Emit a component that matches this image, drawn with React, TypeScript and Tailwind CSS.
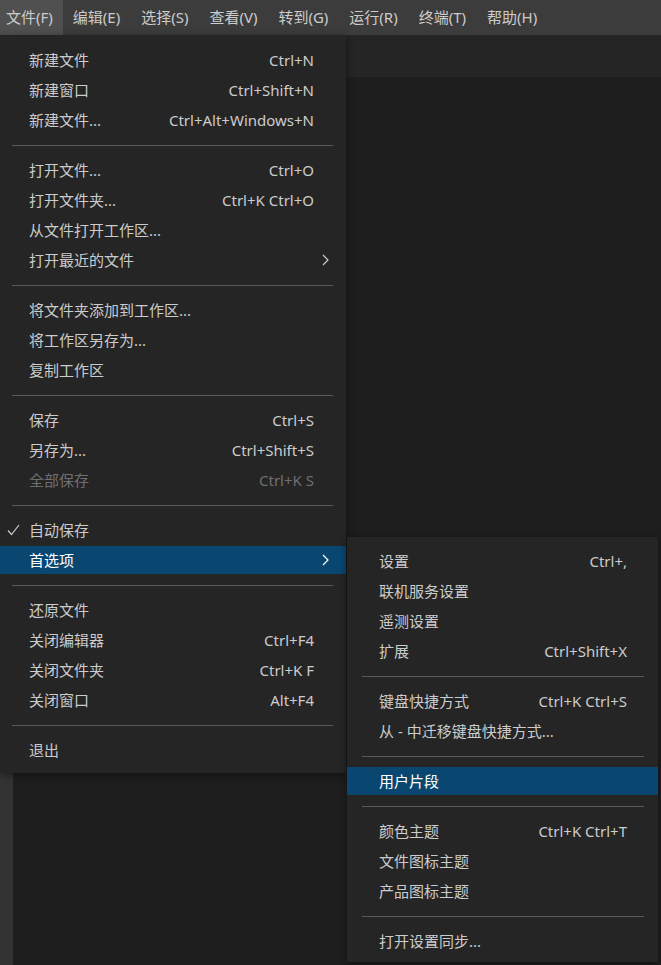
import React from "react";

type Entry =
  | { label: string; keys?: string; sub?: boolean; disabled?: boolean; checked?: boolean; active?: boolean }
  | "sep";

const fileMenu: Entry[] = [
  { label: "新建文件", keys: "Ctrl+N" },
  { label: "新建窗口", keys: "Ctrl+Shift+N" },
  { label: "新建文件...", keys: "Ctrl+Alt+Windows+N" },
  "sep",
  { label: "打开文件...", keys: "Ctrl+O" },
  { label: "打开文件夹...", keys: "Ctrl+K Ctrl+O" },
  { label: "从文件打开工作区..." },
  { label: "打开最近的文件", sub: true },
  "sep",
  { label: "将文件夹添加到工作区..." },
  { label: "将工作区另存为..." },
  { label: "复制工作区" },
  "sep",
  { label: "保存", keys: "Ctrl+S" },
  { label: "另存为...", keys: "Ctrl+Shift+S" },
  { label: "全部保存", keys: "Ctrl+K S", disabled: true },
  "sep",
  { label: "自动保存", checked: true },
  { label: "首选项", sub: true, active: true },
  "sep",
  { label: "还原文件" },
  { label: "关闭编辑器", keys: "Ctrl+F4" },
  { label: "关闭文件夹", keys: "Ctrl+K F" },
  { label: "关闭窗口", keys: "Alt+F4" },
  "sep",
  { label: "退出" },
];

const prefsMenu: Entry[] = [
  { label: "设置", keys: "Ctrl+," },
  { label: "联机服务设置" },
  { label: "遥测设置" },
  { label: "扩展", keys: "Ctrl+Shift+X" },
  "sep",
  { label: "键盘快捷方式", keys: "Ctrl+K Ctrl+S" },
  { label: "从 - 中迁移键盘快捷方式..." },
  "sep",
  { label: "用户片段", active: true },
  "sep",
  { label: "颜色主题", keys: "Ctrl+K Ctrl+T" },
  { label: "文件图标主题" },
  { label: "产品图标主题" },
  "sep",
  { label: "打开设置同步..." },
];

const menubar = ["文件(F)", "编辑(E)", "选择(S)", "查看(V)", "转到(G)", "运行(R)", "终端(T)", "帮助(H)"];

function Check() {
  return (
    <svg width="13" height="12" viewBox="0 0 13 12" fill="none">
      <polyline points="1,6.5 4.5,10.5 12,1" stroke="#cccccc" strokeWidth="1.2" />
    </svg>
  );
}

function Chevron({ color }: { color: string }) {
  return (
    <svg width="7" height="12" viewBox="0 0 7 12" fill="none">
      <polyline points="1,1 6,6 1,11" stroke={color} strokeWidth="1.2" />
    </svg>
  );
}

function Menu({ items, sub }: { items: Entry[]; sub?: boolean }) {
  return (
    <div className={sub ? "pt-[9px] pb-[6px]" : "pt-[10px] pb-[8px]"}>
      {items.map((it, i) =>
        it === "sep" ? (
          <div key={i} className={`h-[20px] flex items-center ${sub ? "pl-[15px] pr-[14px]" : "pl-[12px] pr-[13px]"}`}>
            <div className="h-px w-full bg-[#5a5a5a]" />
          </div>
        ) : (
          <div key={i} className="h-[30px] py-px">
            <div
              className={`h-full flex items-center ${sub ? "pl-[10px] pr-[31px]" : "pl-[7px] pr-[17px]"} ${
                it.active ? "bg-[#094771] text-white" : it.disabled ? "text-[#6f6f6f]" : "text-[#cccccc]"
              }`}
            >
              <span className="w-[22px] flex items-center">{it.checked && <Check />}</span>
              <span className="flex-1 whitespace-nowrap">{it.label}</span>
              {it.keys && <span className={`whitespace-nowrap ${sub ? "" : "mr-[15px]"}`}>{it.keys}</span>}
              {it.sub && <Chevron color={it.active ? "#ffffff" : "#cccccc"} />}
            </div>
          </div>
        )
      )}
    </div>
  );
}

export default function App() {
  return (
    <div className="relative w-[661px] h-[965px] overflow-hidden bg-[#1e1e1e] flex flex-col font-['Noto_Sans','Noto_Sans_CJK_SC',sans-serif] text-[15px]">
      {/* menubar */}
      <div className="h-[35px] shrink-0 bg-[#3c3c3c] flex items-stretch">
        {menubar.map((m, i) => (
          <div
            key={m}
            className={`flex items-center whitespace-nowrap text-[#cccccc] ${
              i === 0 ? "bg-[#505050] pl-[6px] pr-[10px] mr-[4px]" : "px-[6px] mr-[9px]"
            }`}
          >
            {m}
          </div>
        ))}
      </div>

      {/* workbench behind the menus */}
      <div className="flex-1 flex">
        <div className="w-[13px] bg-[#333333]" />
        <div className="flex-1 flex flex-col">
          <div className="h-[42px] bg-[#252526]" />
          <div className="flex-1 bg-[#1e1e1e]" />
        </div>
      </div>

      {/* 文件 menu */}
      <div className="absolute top-[35px] left-0 w-[346px] bg-[#252526] shadow-[0_2px_8px_rgba(0,0,0,0.45)]">
        <Menu items={fileMenu} />
      </div>

      {/* 首选项 submenu */}
      <div className="absolute top-[537px] left-[347px] w-[311px] bg-[#252526] shadow-[0_2px_8px_rgba(0,0,0,0.45)]">
        <Menu items={prefsMenu} sub />
      </div>
    </div>
  );
}
